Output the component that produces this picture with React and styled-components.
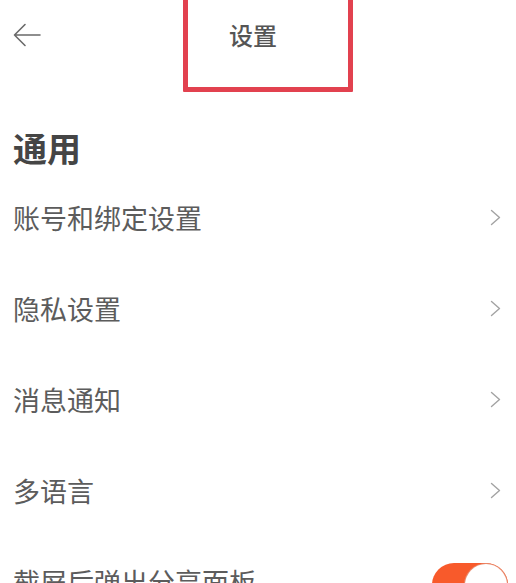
import React from "react"
import styled, { createGlobalStyle } from "styled-components"

const GlobalStyle = createGlobalStyle`
  html, body {
    margin: 0;
    padding: 0;
    background: #fff;
    font-family: "Noto Sans CJK SC", "Noto Sans", sans-serif;
  }
`

const items = [
  { label: "账号和绑定设置", type: "link" },
  { label: "隐私设置", type: "link" },
  { label: "消息通知", type: "link" },
  { label: "多语言", type: "link" },
  { label: "截屏后弹出分享面板", type: "toggle" },
]

const BackIcon = () => (
  <svg width="28" height="24" viewBox="0 0 28 24" fill="none">
    <path
      d="M27 12H1.5M12 1.5L1.5 12L12 22.5"
      stroke="#6a6a6a"
      strokeWidth="1.6"
      strokeLinecap="round"
      strokeLinejoin="round"
    />
  </svg>
)

const Chevron = () => (
  <svg width="11" height="17" viewBox="0 0 11 17" fill="none">
    <path
      d="M1.5 1.5L9.5 8.5L1.5 15.5"
      stroke="#a3a3a3"
      strokeWidth="1.4"
      strokeLinecap="round"
      strokeLinejoin="round"
    />
  </svg>
)

const App = () => {
  return (
    <Page>
      <GlobalStyle />
      <Header>
        <BackButton>
          <BackIcon />
        </BackButton>
        <Title>设置</Title>
        <span />
      </Header>
      <Highlight />
      <Section>通用</Section>
      <List>
        {items.map(item => (
          <Row key={item.label}>
            <Label>{item.label}</Label>
            {item.type === "toggle" ? (
              <Toggle>
                <Knob />
              </Toggle>
            ) : (
              <Arrow>
                <Chevron />
              </Arrow>
            )}
          </Row>
        ))}
      </List>
    </Page>
  )
}

const Page = styled.div`
  position: relative;
  width: 516px;
  height: 583px;
  overflow: hidden;
  background: #fff;
`

const Header = styled.header`
  display: grid;
  grid-template-columns: 1fr auto 1fr;
  align-items: center;
  height: 70px;
  padding: 0 23px 0 13px;
`

const BackButton = styled.div`
  display: flex;
  align-items: center;
`

const Title = styled.h1`
  margin: 0;
  font-size: 24px;
  font-weight: 500;
  color: #555;
  line-height: 1;
`

const Highlight = styled.div`
  position: absolute;
  top: -6px;
  left: 183px;
  width: 160px;
  height: 88px;
  border: 5px solid #e2414f;
  border-radius: 1px;
`

const Section = styled.h2`
  margin: 0;
  padding: 56px 0 0 13px;
  height: 46px;
  font-size: 34px;
  font-weight: 700;
  line-height: 44px;
  color: #454545;
`

const List = styled.div`
  display: flex;
  flex-direction: column;
`

const Row = styled.div`
  display: flex;
  align-items: center;
  justify-content: space-between;
  height: 91px;
  padding: 0 8px 0 13px;
`

const Label = styled.span`
  font-size: 27px;
  line-height: 1;
  color: #5c5c5c;
`

const Arrow = styled.span`
  display: flex;
  margin-right: 7px;
`

const Toggle = styled.div`
  position: relative;
  width: 76px;
  height: 44px;
  margin-top: 6px;
  border-radius: 22px;
  background: #f85a2b;
`

const Knob = styled.div`
  position: absolute;
  top: 1px;
  right: 1px;
  width: 42px;
  height: 42px;
  border-radius: 50%;
  background: #fff;
  box-shadow: 0 0 0 1px #e8896c;
`

export default App
